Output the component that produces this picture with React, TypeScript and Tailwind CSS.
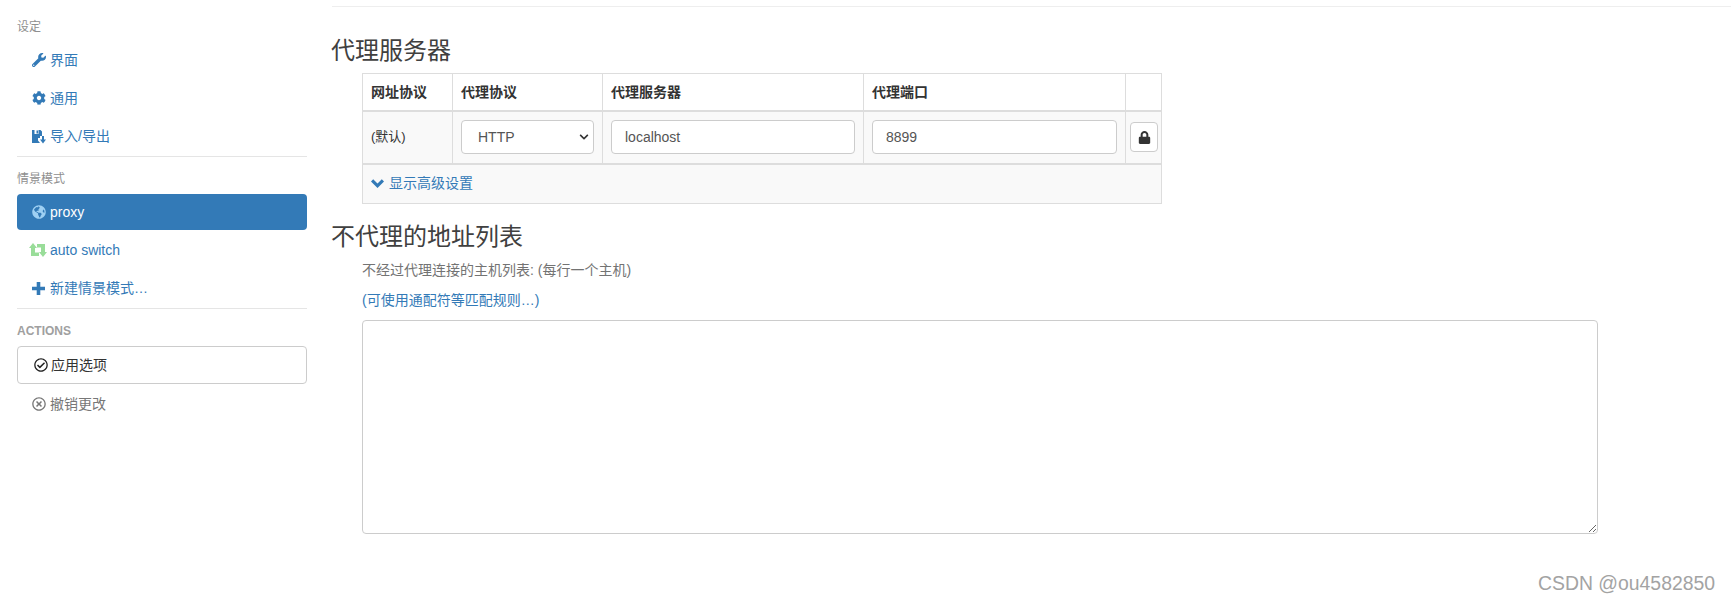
import React from "react";
import {
  FaWrench,
  FaCog,
  FaGlobeAmericas,
  FaChevronDown,
  FaLock,
  FaRegCheckCircle,
  FaRegTimesCircle,
} from "react-icons/fa";

const font = "[font-family:'Liberation_Sans','Noto_Sans_CJK_SC',sans-serif]";

function ImportIcon() {
  return (
    <svg width="14" height="15" viewBox="0 0 14 15" className="shrink-0" fill="#337ab7">
      <path d="M0 1h8.5L10 2.5V7H8v2H6v2.5L8 14H0V1z" />
      <rect x="2.5" y="1" width="4" height="4" fill="#fff" />
      <rect x="4.5" y="1.5" width="1.5" height="3" fill="#337ab7" />
      <path d="M10 7h2v3.5h2L11 14.5l-3-4h2V7z" />
    </svg>
  );
}

function RetweetIcon() {
  return (
    <svg width="18" height="14" viewBox="0 0 18 14" className="shrink-0 -ml-[3px]" fill="#99dd99">
      <path d="M4 0 L8 5 H6 V9.5 H10 V13 H2 V5 H0 Z" />
      <path d="M14 14 L10 9 H12 V4.5 H8 V1 H16 V9 H18 Z" />
    </svg>
  );
}

function PlusIcon() {
  return (
    <svg width="13" height="13" viewBox="0 0 13 13" className="shrink-0" fill="#337ab7">
      <path d="M4.7 0h3.6v4.7H13v3.6H8.3V13H4.7V8.3H0V4.7h4.7z" />
    </svg>
  );
}

function BoldChevron() {
  return (
    <svg width="13" height="9" viewBox="0 0 13 9" className="shrink-0 mr-[5px]" fill="#337ab7">
      <path d="M0 2.4 2.2 0.2 6.5 4.5 10.8 0.2 13 2.4 6.5 8.9z" />
    </svg>
  );
}

function Item({ icon, children, active }: { icon: React.ReactNode; children: React.ReactNode; active?: boolean }) {
  return (
    <div
      className={
        "flex h-9 mb-0.5 items-center pl-[15px] rounded text-sm " +
        (active ? "bg-[#337ab7] text-white" : "text-[#337ab7]")
      }
    >
      <span className="w-[18px] flex items-center shrink-0">{icon}</span>
      <span className="-mt-px">{children}</span>
    </div>
  );
}

function Heading({ children }: { children: React.ReactNode }) {
  return <div className="text-xs leading-[17px] text-[#8f8f8f]">{children}</div>;
}

function Th({ children }: { children?: React.ReactNode }) {
  return (
    <th className="border border-[#ddd] border-b-2 px-2 text-left align-middle text-sm font-bold text-[#333]">
      {children}
    </th>
  );
}

export default function App() {
  return (
    <div className={"flex h-[599px] w-[1731px] overflow-hidden bg-white relative " + font}>
      <aside className="w-[290px] ml-[17px] shrink-0 pt-[19px]">
        <Heading>设定</Heading>
        <div className="mt-[6px]">
          <Item icon={<FaWrench size={14} />}>界面</Item>
          <Item icon={<FaCog size={14} />}>通用</Item>
          <Item icon={<ImportIcon />}>导入/导出</Item>
        </div>
        <div className="h-px bg-[#e5e5e5] mb-[14px]" />
        <Heading>情景模式</Heading>
        <div className="mt-[6px]">
          <Item active icon={<FaGlobeAmericas size={14} className="text-[#9fd0f3]" />}>proxy</Item>
          <Item icon={<RetweetIcon />}>auto switch</Item>
          <Item icon={<PlusIcon />}>新建情景模式…</Item>
        </div>
        <div className="h-px bg-[#e5e5e5] mb-[14px]" />
        <div className="text-xs leading-[17px] font-bold text-[#a0a0a0]">ACTIONS</div>
        <div className="mt-[6px] flex h-[38px] items-center rounded border border-[#ccc] pl-[16px] text-sm text-[#333]">
          <FaRegCheckCircle size={14} className="mr-[3px] text-[#222]" />
          <span className="-mt-px">应用选项</span>
        </div>
        <div className="mt-0.5 flex h-9 items-center pl-[15px] text-sm text-[#777]">
          <FaRegTimesCircle size={14} className="mr-[4px]" />
          <span className="-mt-px">撤销更改</span>
        </div>
      </aside>

      <main className="ml-[25px] flex-1 min-w-0">
        <div className="mt-1.5 h-px bg-[#eee]" />
        <h3 className="-ml-px mt-[27px] text-2xl leading-[33px] font-normal text-[#404040]">代理服务器</h3>
        <table className="ml-[30px] mt-[6px] w-[799px] table-fixed border-collapse text-sm">
          <colgroup>
            <col className="w-[90px]" />
            <col className="w-[150px]" />
            <col className="w-[261px]" />
            <col className="w-[262px]" />
            <col className="w-[36px]" />
          </colgroup>
          <thead>
            <tr className="h-[37px]">
              <Th>网址协议</Th>
              <Th>代理协议</Th>
              <Th>代理服务器</Th>
              <Th>代理端口</Th>
              <Th />
            </tr>
          </thead>
          <tbody>
            <tr className="h-[53px] bg-[#f9f9f9]">
              <td className="border border-[#ddd] border-b-2 px-2 text-[13px] text-[#333]">(默认)</td>
              <td className="border border-[#ddd] border-b-2 px-2">
                <div className="relative flex h-[34px] items-center rounded border border-[#ccc] bg-white pl-[16px] text-sm text-[#555]">
                  HTTP
                  <FaChevronDown size={10} className="absolute right-[4px] top-[11px] text-[#333]" />
                </div>
              </td>
              <td className="border border-[#ddd] border-b-2 px-2">
                <div className="flex h-[34px] items-center rounded border border-[#ccc] bg-white pl-[13px] text-sm text-[#555]">localhost</div>
              </td>
              <td className="border border-[#ddd] border-b-2 px-2">
                <div className="flex h-[34px] items-center rounded border border-[#ccc] bg-white pl-[13px] text-sm text-[#555]">8899</div>
              </td>
              <td className="border border-[#ddd] border-b-2 px-1">
                <div className="flex h-[30px] w-7 items-center justify-center rounded border border-[#ccc] bg-white text-[#333]">
                  <FaLock size={13} />
                </div>
              </td>
            </tr>
            <tr className="h-[40px] bg-[#f9f9f9]">
              <td colSpan={5} className="border border-[#ddd] px-2">
                <div className="flex items-center text-sm text-[#337ab7]">
                  <BoldChevron />
                  <span className="-mt-px">显示高级设置</span>
                </div>
              </td>
            </tr>
          </tbody>
        </table>
        <h3 className="-ml-px mt-[16px] text-2xl leading-[33px] font-normal text-[#404040]">不代理的地址列表</h3>
        <div className="ml-[30px]">
          <p className="mt-[7px] text-sm leading-[20px] text-[#737373]">不经过代理连接的主机列表: (每行一个主机)</p>
          <p className="mt-[10px] text-sm leading-[20px] text-[#337ab7]">(可使用通配符等匹配规则…)</p>
          <textarea
            readOnly
            className="mt-[10px] block h-[214px] w-[1236px] rounded border border-[#ccc] bg-white resize"
          />
        </div>
      </main>
      <div className="absolute left-[1538px] top-[571px] text-[19.4px] leading-[24px] text-[#a3a3a3] [font-family:'Liberation_Sans',sans-serif]">
        CSDN @ou4582850
      </div>
    </div>
  );
}
